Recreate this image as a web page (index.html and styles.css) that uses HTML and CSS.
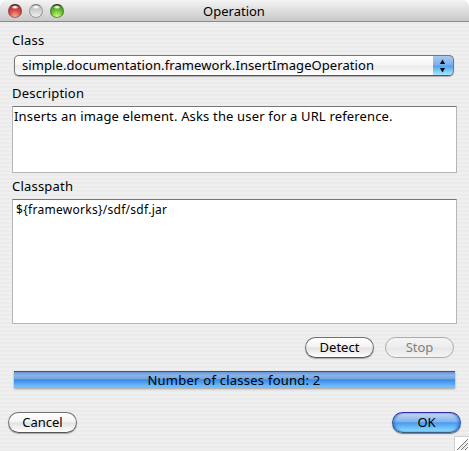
FILE: index.html
```html
<!DOCTYPE html>
<html lang="en">
<head>
<meta charset="utf-8">
<title>Operation</title>
<link rel="stylesheet" href="styles.css">
</head>
<body>
<div class="window">
  <header class="titlebar">
    <div class="lights"><i class="light red"></i><i class="light gray"></i><i class="light green"></i></div>
    <h1 class="title">Operation</h1>
  </header>
  <main class="content">
    <div class="label label-class">Class</div>
    <div class="select">
      <span class="select-value">simple.documentation.framework.InsertImageOperation</span>
      <span class="select-arrows">
        <svg width="20" height="20" viewBox="0 0 20 20"><path d="M9.5 3.5l2.6 4.5H6.9zM9.5 16.5L12.1 12H6.9z" fill="#060b18"/></svg>
      </span>
    </div>
    <div class="label label-description">Description</div>
    <div class="area description">Inserts an image element. Asks the user for a URL reference.</div>
    <div class="label label-classpath">Classpath</div>
    <div class="area classpath">${frameworks}/sdf/sdf.jar</div>
    <div class="actions">
      <button class="button detect">Detect</button>
      <button class="button disabled" disabled>Stop</button>
    </div>
    <div class="progress"><span>Number of classes found: 2</span></div>
    <div class="footer">
      <button class="button">Cancel</button>
      <button class="button primary">OK</button>
    </div>
  </main>
  <div class="grip">
    <svg width="15" height="15" viewBox="0 0 15 15"><rect width="15" height="15" fill="#fff"/><path d="M0 15V.5H15M.5 0V15" fill="none" stroke="#d0d0d0"/><path d="M3 14L14 3M7 14L14 7M11 14L14 11" stroke="#777" fill="none"/><path d="M4.5 14L14 4.5M8.5 14L14 8.5" stroke="#ccc" fill="none"/></svg>
  </div>
</div>
</body>
</html>
```

FILE: styles.css
```css
* { box-sizing: border-box; }
body { margin: 0; background: #fff; overflow: hidden; }
.window {
  position: relative;
  width: 469px;
  height: 451px;
  overflow: hidden;
  border-radius: 7px 7px 0 0;
  background: repeating-linear-gradient(#efefef 0 2px, #ebebeb 2px 4px);
  color: #000;
  font: 13px/16px "Noto Sans", "Open Sans", sans-serif;
}
.titlebar {
  display: grid;
  grid-template-columns: 75px 1fr 75px;
  align-items: center;
  height: 22px;
  border-bottom: 1px solid #8c8c8c;
  background: linear-gradient(#f4f4f4, #e0e0e0 45%, #c9c9c9);
}
.lights { display: flex; gap: 7px; padding-left: 8px; }
.light {
  width: 14px;
  height: 14px;
  border: 1px solid #777;
  border-top-color: #444;
  border-radius: 50%;
}
.red { border-color: #3b1818 #8d4743 #a26660; background: radial-gradient(ellipse 4px 2px at 50% 18%, #fff 20%, transparent), radial-gradient(circle at 50% 95%, #ffaaa0, #d44a43 50%, #9b2020); }
.gray { border-color: #777 #999 #999; background: radial-gradient(ellipse 4px 2px at 50% 18%, #fff 20%, transparent), linear-gradient(#bbb, #d2d2d2 50%, #f1f1f1); }
.green { border-color: #173707 #4b7c29 #67913e; background: radial-gradient(ellipse 4px 2px at 50% 18%, #fff 20%, transparent), radial-gradient(circle at 50% 95%, #cdff82, #6abd2d 50%, #2b7510); }
.title { margin: 0; font: inherit; text-align: center; padding-right: 1px; }
.content { display: flex; flex-direction: column; }
.label { margin-left: 12px; height: 16px; letter-spacing: .2px; }
.label-class { margin-top: 10px; }
.select {
  display: flex;
  width: 440px;
  height: 21px;
  margin: 7px 0 0 14px;
  overflow: hidden;
  border: 1px solid #777;
  border-bottom-color: #555;
  border-radius: 5px;
  background: linear-gradient(#fff, #f5f5f5 48%, #ebebeb 52%, #fff);
  box-shadow: 0 1px 1px #aaa;
}
.select-value { flex: 1; padding: 1px 0 0 7px; white-space: nowrap; letter-spacing: .08px; }
.select-arrows {
  width: 21px;
  margin: -1px -1px -1px 0;
  border: 1px solid #244f99;
  border-top-color: #171779;
  border-left: 0;
  border-radius: 0 5px 5px 0;
  background: linear-gradient(#a8c9ef, #77b0ed 48%, #519fee 52%, #a1eaff);
}
.select-arrows svg { display: block; }
.label-description { margin-top: 9px; }
.area {
  width: 445px;
  margin-left: 12px;
  border: 1px solid #b5b5b5;
  border-top: 1px solid #777;
  background: #fff;
  white-space: nowrap;
}
.description { height: 67px; margin-top: 5px; padding: 1px 1px; letter-spacing: .16px; }
.label-classpath { margin-top: 5px; }
.classpath { height: 125px; margin-top: 5px; padding: 2px 3px; font-size: 12px; letter-spacing: .28px; }
.actions { display: flex; gap: 11px; margin: 13px 0 0 305px; }
.button {
  width: 69px;
  height: 21px;
  padding: 0 0 2px;
  border: 1px solid #707070;
  border-bottom-color: #555;
  border-radius: 11px;
  background: linear-gradient(#fff, #f4f4f4 45%, #e2e2e2 52%, #fff);
  box-shadow: 0 1px 1px #aaa;
  color: #000;
  font: inherit;
  line-height: 16px;
}
.disabled { border-color: #aaa; color: #808080; background: linear-gradient(#f4f4f4, #eee 45%, #e7e7e7 52%, #f4f4f4); box-shadow: none; }
.primary {
  border-color: #3028a0 #2854a6 #385d85;
  background: linear-gradient(#c5d9f4, #83b3ec 45%, #489bee 52%, #91e1ff);
  box-shadow: 0 1px 1px #777, inset 2px 0 2px #2868cf88, inset -2px 0 2px #2868cf88;
}
.progress {
  width: 441px;
  height: 17px;
  margin: 13px 0 0 14px;
  padding-right: 1px;
  border-top: 1px solid #2055b5;
  background: linear-gradient(#6694d5, #8ab4e7 20%, #77a7e2 40%, #398be3 50%, #70baff 88%, #75bff6);
  box-shadow: 0 1px 2px #999;
  text-align: center;
  letter-spacing: .24px;
}
.footer { display: flex; justify-content: space-between; margin: 24px 8px 0; }
.grip { position: absolute; right: 0; bottom: 0; width: 15px; height: 15px; }
.grip svg { display: block; }
```
